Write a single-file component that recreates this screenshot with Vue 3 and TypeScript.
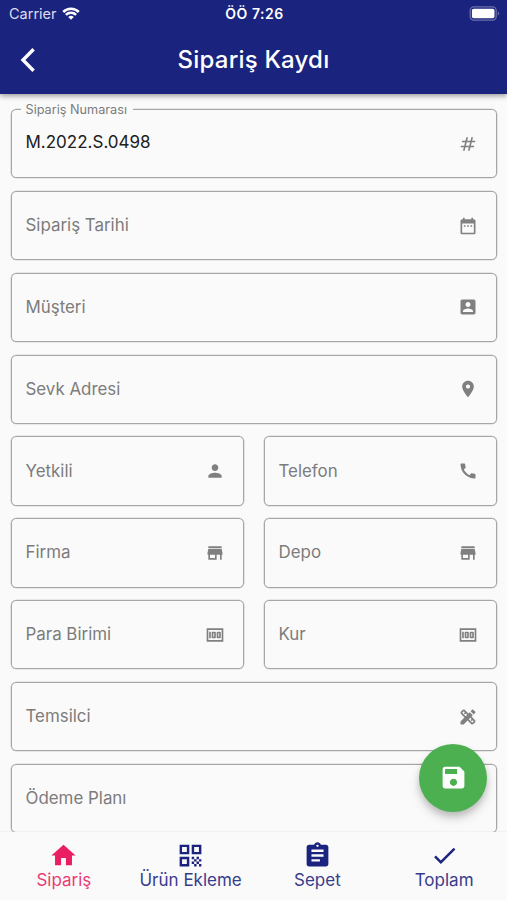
<script setup lang="ts">
import { ref } from 'vue'

interface Field {
  label: string
  icon: string
  value?: string
  half?: boolean
}

const icons: Record<string, string> = {
  hash: 'M20.5 10L21 8h-4l1-4h-2l-1 4h-4l1-4h-2L9 8H5l-.5 2h4l-1 4h-4L3 16h4l-1 4h2l1-4h4l-1 4h2l1-4h4l.5-2h-4l1-4h4zM13.5 14h-4l1-4h4l-1 4z',
  calendar: 'M9 11H7v2h2v-2zm4 0h-2v2h2v-2zm4 0h-2v2h2v-2zm2-7h-1V2h-2v2H8V2H6v2H5c-1.11 0-1.99.9-1.99 2L3 20c0 1.1.89 2 2 2h14c1.1 0 2-.9 2-2V6c0-1.1-.9-2-2-2zm0 16H5V9h14v11z',
  account: 'M3 5v14c0 1.1.89 2 2 2h14c1.1 0 2-.9 2-2V5c0-1.1-.9-2-2-2H5c-1.11 0-2 .9-2 2zm12 4c0 1.66-1.34 3-3 3s-3-1.34-3-3 1.34-3 3-3 3 1.34 3 3zm-9 8c0-2 4-3.1 6-3.1s6 1.1 6 3.1v1H6v-1z',
  place: 'M12 2C8.13 2 5 5.13 5 9c0 5.25 7 13 7 13s7-7.75 7-13c0-3.87-3.13-7-7-7zm0 9.5c-1.38 0-2.5-1.12-2.5-2.5s1.12-2.5 2.5-2.5 2.5 1.12 2.5 2.5-1.12 2.5-2.5 2.5z',
  person: 'M12 12c2.21 0 4-1.79 4-4s-1.79-4-4-4-4 1.79-4 4 1.79 4 4 4zm0 2c-2.67 0-8 1.34-8 4v2h16v-2c0-2.66-5.33-4-8-4z',
  phone: 'M20.01 15.38c-1.23 0-2.42-.2-3.53-.56-.35-.12-.74-.03-1.01.24l-1.57 1.97c-2.83-1.35-5.48-3.9-6.89-6.83l1.95-1.66c.27-.28.35-.67.24-1.02-.37-1.11-.56-2.3-.56-3.53 0-.54-.45-.99-.99-.99H4.19C3.65 3 3 3.24 3 3.99 3 13.28 10.73 21 20.01 21c.71 0 .99-.63.99-1.18v-3.45c0-.54-.45-.99-.99-.99z',
  store: 'M20 4H4v2h16V4zm1 10v-2l-1-5H4l-1 5v2h1v6h10v-6h4v6h2v-6h1zm-9 4H6v-4h6v4z',
  money: 'M5 8h2v8H5zm7 0H9c-.55 0-1 .45-1 1v6c0 .55.45 1 1 1h3c.55 0 1-.45 1-1V9c0-.55-.45-1-1-1zm-1 6h-1v-4h1v4zm7-6h-3c-.55 0-1 .45-1 1v6c0 .55.45 1 1 1h3c.55 0 1-.45 1-1V9c0-.55-.45-1-1-1zm-1 6h-1v-4h1v4zM2 4v16h20V4H2zm2 14V6h16v12H4z',
  design: 'M16.24 11.51l1.57-1.57-3.75-3.75-1.57 1.57-4.14-4.13c-.78-.78-2.05-.78-2.83 0l-1.9 1.9c-.78.78-.78 2.05 0 2.83l4.13 4.13L3 17.25V21h3.75l4.76-4.76 4.13 4.13c.95.95 2.23.6 2.83 0l1.9-1.9c.78-.78.78-2.05 0-2.83l-4.13-4.13zM9.18 11.07L5.04 6.94l1.89-1.9L8.2 6.31 7.02 7.5l1.41 1.41 1.19-1.19 1.45 1.45-1.89 1.9zM17.06 18.96l-4.13-4.13 1.9-1.9 1.45 1.45-1.19 1.19 1.41 1.41 1.19-1.19 1.27 1.27-1.9 1.9zM20.71 7.04c.39-.39.39-1.02 0-1.41l-2.34-2.34c-.47-.47-1.12-.29-1.41 0l-1.83 1.83 3.75 3.75 1.83-1.83z',
  home: 'M10 20v-6h4v6h5v-8h3L12 3 2 12h3v8z',
  qr: 'M3 11h8V3H3v8zm2-6h4v4H5V5zM3 21h8v-8H3v8zm2-6h4v4H5v-4zM13 3v8h8V3h-8zm6 6h-4V5h4v4zM19 19h2v2h-2zM13 13h2v2h-2zM15 15h2v2h-2zM13 17h2v2h-2zM15 19h2v2h-2zM17 17h2v2h-2zM17 13h2v2h-2zM19 15h2v2h-2z',
  assignment: 'M19 3h-4.18C14.4 1.84 13.3 1 12 1c-1.3 0-2.4.84-2.82 2H5c-1.1 0-2 .9-2 2v14c0 1.1.9 2 2 2h14c1.1 0 2-.9 2-2V5c0-1.1-.9-2-2-2zm-7 0c.55 0 1 .45 1 1s-.45 1-1 1-1-.45-1-1 .45-1 1-1zm2 14H7v-2h7v2zm3-4H7v-2h10v2zm0-4H7V7h10v2z',
  check: 'M9 16.17L4.83 12l-1.42 1.41L9 19 21 7l-1.41-1.41z',
  save: 'M17 3H5c-1.11 0-2 .9-2 2v14c0 1.1.89 2 2 2h14c1.1 0 2-.9 2-2V7l-4-4zm-5 16c-1.66 0-3-1.34-3-3s1.34-3 3-3 3 1.34 3 3-1.34 3-3 3zm3-10H5V5h10v4z',
}

const fields: Field[] = [
  { label: 'Sipariş Numarası', icon: 'hash', value: 'M.2022.S.0498' },
  { label: 'Sipariş Tarihi', icon: 'calendar' },
  { label: 'Müşteri', icon: 'account' },
  { label: 'Sevk Adresi', icon: 'place' },
  { label: 'Yetkili', icon: 'person', half: true },
  { label: 'Telefon', icon: 'phone', half: true },
  { label: 'Firma', icon: 'store', half: true },
  { label: 'Depo', icon: 'store', half: true },
  { label: 'Para Birimi', icon: 'money', half: true },
  { label: 'Kur', icon: 'money', half: true },
  { label: 'Temsilci', icon: 'design' },
  { label: 'Ödeme Planı', icon: '' },
]

const tabs = [
  { label: 'Sipariş', icon: 'home' },
  { label: 'Ürün Ekleme', icon: 'qr' },
  { label: 'Sepet', icon: 'assignment' },
  { label: 'Toplam', icon: 'check' },
]
const active = ref(0)
</script>

<template>
  <div class="screen">
    <header class="top">
      <div class="status">
        <div class="carrier">
          <span>Carrier</span>
          <svg class="wifi" viewBox="0 0 18 13">
            <path d="M9 12.8L6.2 10a4 4 0 0 1 5.6 0z" fill="#fff" />
            <path d="M3.9 7.9a7.2 7.2 0 0 1 10.2 0M1.2 5a11 11 0 0 1 15.6 0" fill="none" stroke="#fff" stroke-width="2.5" />
          </svg>
        </div>
        <span class="clock">ÖÖ 7:26</span>
        <svg class="battery" viewBox="0 0 31 15">
          <rect x="1.2" y=".9" width="26" height="13.2" rx="3.6" fill="none" stroke="#6c70aa" stroke-width="1.3" />
          <rect x="2.9" y="2.7" width="22.6" height="9.6" rx="1.8" fill="#fff" />
          <path d="M28.8 5.2c2 .9 2 3.5 0 4.4z" fill="#6c70aa" />
        </svg>
      </div>
      <div class="bar">
        <svg class="back" viewBox="0 0 16 26"><path d="M13.6 2.2L3 13l10.6 10.8" /></svg>
        <h1>Sipariş Kaydı</h1>
      </div>
    </header>

    <main class="form">
      <div v-for="f in fields" :key="f.label" class="field" :class="{ half: f.half, filled: f.value }">
        <span class="label">{{ f.label }}</span>
        <span v-if="f.value" class="value">{{ f.value }}</span>
        <svg v-if="f.icon" class="icon" viewBox="0 0 24 24"><path :d="icons[f.icon]" /></svg>
      </div>
    </main>

    <button class="fab" type="button">
      <svg viewBox="0 0 24 24"><path :d="icons.save" /></svg>
    </button>

    <nav class="tabs">
      <button
        v-for="(t, i) in tabs"
        :key="t.label"
        type="button"
        class="tab"
        :class="{ active: i === active }"
        @click="active = i"
      >
        <svg viewBox="0 0 24 24"><path :d="icons[t.icon]" /></svg>
        <span>{{ t.label }}</span>
      </button>
    </nav>
  </div>
</template>

<style>
body {
  margin: 0;
  background: #fafafa;
}
</style>

<style scoped>
.screen {
  position: relative;
  display: flex;
  flex-direction: column;
  height: 900px;
  overflow: hidden;
  background: #fafafa;
  font-family: Inter, 'Liberation Sans', sans-serif;
}
svg {
  display: block;
  fill: currentColor;
}
.top {
  position: relative;
  z-index: 1;
  flex: none;
  height: 94px;
  background: #1a237e;
  color: #fff;
  box-shadow: 0 2px 5px rgba(0, 0, 0, 0.38);
}
.status {
  display: grid;
  grid-template-columns: 1fr auto 1fr;
  align-items: center;
  height: 27px;
  padding: 0 7px 0 9px;
  font-size: 14.5px;
}
.carrier {
  display: flex;
  align-items: center;
  gap: 5px;
  color: #dcdded;
}
.wifi {
  width: 18px;
  height: 13px;
  margin-top: -1px;
}
.clock {
  font-weight: 600;
  font-size: 14px;
  letter-spacing: 0.5px;
}
.battery {
  justify-self: end;
  width: 31px;
  height: 15px;
}
.bar {
  display: grid;
  grid-template-columns: 60px 1fr 60px;
  align-items: center;
  height: 66px;
}
.back {
  width: 16px;
  height: 26px;
  margin-left: 20px;
  fill: none;
  stroke: #fff;
  stroke-width: 3.4;
}
h1 {
  margin: 0;
  font-size: 24px;
  font-weight: 500;
  line-height: 30px;
  letter-spacing: 0.2px;
  text-align: center;
  white-space: nowrap;
}
.form {
  display: grid;
  flex: 1;
  grid-template-columns: 1fr 1fr;
  grid-auto-rows: 69.4px;
  align-content: start;
  gap: 12.45px 20px;
  min-height: 0;
  padding: 15.1px 10px 0 11px;
  overflow: hidden;
}
.field {
  position: relative;
  display: flex;
  grid-column: span 2;
  align-items: center;
  justify-content: space-between;
  box-sizing: border-box;
  padding: 0 18px 0 13.5px;
  border: 1px solid #a6a6a6;
  border-radius: 5px;
  box-shadow: 0 0 0 0.3px #b0b0b0;
  color: #7c7c7c;
}
.field.half {
  grid-column: span 1;
}
.label {
  margin-bottom: 1px;
  font-size: 16.9px;
  line-height: 22px;
  white-space: nowrap;
}
.filled .label {
  position: absolute;
  top: -10px;
  left: 8.5px;
  margin: 0;
  padding: 0 6px 0 5px;
  background: #fafafa;
  font-size: 12.7px;
  line-height: 19px;
}
.value {
  margin-bottom: 4px;
  color: #202020;
  font-size: 17px;
  line-height: 22px;
}
.icon {
  width: 20px;
  height: 20px;
  color: #808080;
}
.fab {
  position: absolute;
  z-index: 2;
  top: 744px;
  left: 419px;
  display: flex;
  align-items: center;
  justify-content: center;
  width: 68px;
  height: 68px;
  padding: 0 0 1px;
  border: 0;
  border-radius: 50%;
  background: #4caf50;
  color: #fff;
  box-shadow: 0 4px 6px rgba(0, 0, 0, 0.16), 0 7px 12px rgba(0, 0, 0, 0.12);
}
.fab svg {
  width: 29px;
  height: 29px;
}
.tabs {
  display: grid;
  flex: none;
  grid-template-columns: repeat(4, 1fr);
  height: 68px;
  background: #fafafa;
  box-shadow: 0 -1px 1px rgba(0, 0, 0, 0.03);
}
.tab {
  display: flex;
  flex-direction: column;
  align-items: center;
  padding: 9px 0 0 1px;
  border: 0;
  background: none;
  color: #1a237e;
  font: inherit;
}
.tab svg {
  width: 29px;
  height: 29px;
}
.tab span {
  font-size: 17px;
  line-height: 21px;
  opacity: 0.88;
  white-space: nowrap;
}
.tab.active {
  color: #e91e63;
}
</style>
